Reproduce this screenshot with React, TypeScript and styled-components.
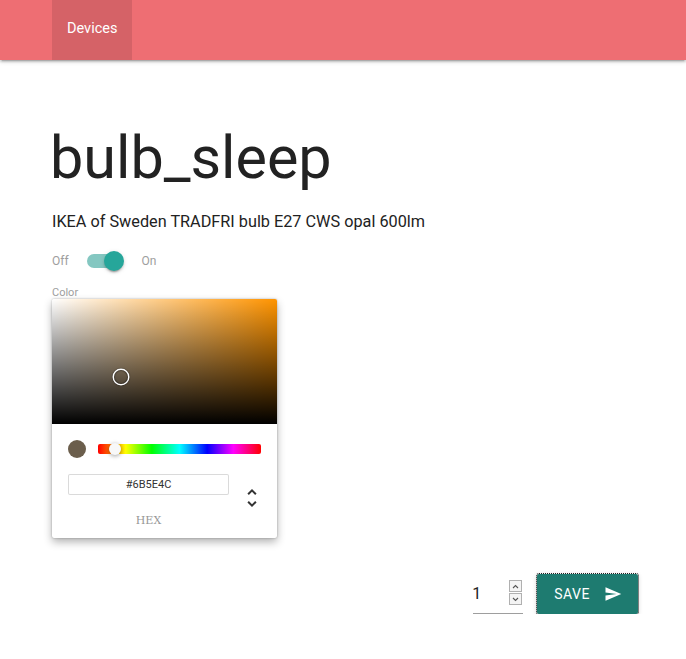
import styled, { createGlobalStyle } from "styled-components";

const GlobalStyle = createGlobalStyle`
  html, body {
    margin: 0;
    padding: 0;
    background: #fff;
    font-family: Roboto, "Noto Sans", sans-serif;
    color: rgba(0, 0, 0, 0.87);
  }
  * {
    box-sizing: border-box;
  }
`;

const HUE = 34.8;
const SAT = 0.29;
const VAL = 0.42;

const Nav = styled.nav`
  height: 60px;
  background: #ee6e73;
  box-shadow: 0 2px 2px 0 rgba(0, 0, 0, 0.14), 0 3px 1px -2px rgba(0, 0, 0, 0.12),
    0 1px 5px 0 rgba(0, 0, 0, 0.2);
  padding: 0 52px;
  display: flex;
`;

const NavItem = styled.a<{ $active?: boolean }>`
  display: flex;
  align-items: center;
  padding: 0 15px 4px;
  color: #fff;
  font-size: 14.5px;
  background: ${(p) => (p.$active ? "rgba(0, 0, 0, 0.1)" : "transparent")};
  cursor: pointer;
`;

const Main = styled.main`
  padding: 0 48px 0 52px;
  display: flex;
  flex-direction: column;
`;

const Title = styled.h1`
  font-size: 59.3px;
  font-weight: 400;
  line-height: 64px;
  margin: 66px 0 0 -2px;
  color: #222;
`;

const Subtitle = styled.p`
  font-size: 16.25px;
  line-height: 20px;
  margin: 22px 0 0;
  color: #222;
`;

const SwitchRow = styled.label`
  display: flex;
  align-items: center;
  margin-top: 19px;
  font-size: 12px;
  color: #9e9e9e;
  height: 20px;
`;

const Lever = styled.span<{ $on: boolean }>`
  position: relative;
  width: 36px;
  height: 14px;
  margin: 0 19px 0 18px;
  border-radius: 15px;
  background: ${(p) => (p.$on ? "#84c7c1" : "#818181")};

  &::after {
    content: "";
    position: absolute;
    top: -3px;
    left: ${(p) => (p.$on ? "17px" : "-2px")};
    width: 20px;
    height: 20px;
    border-radius: 50%;
    background: ${(p) => (p.$on ? "#26a69a" : "#f1f1f1")};
    box-shadow: 0 3px 1px -2px rgba(0, 0, 0, 0.2), 0 2px 2px 0 rgba(0, 0, 0, 0.14),
      0 1px 5px 0 rgba(0, 0, 0, 0.12);
  }
`;

const FieldLabel = styled.div`
  margin-top: 15px;
  font-size: 11px;
  line-height: 13px;
  color: #9e9e9e;
`;

const Picker = styled.div`
  width: 225px;
  margin-top: 0;
  background: #fff;
  border-radius: 2px;
  box-shadow: 0 0 2px rgba(0, 0, 0, 0.3), 0 4px 8px rgba(0, 0, 0, 0.3);
`;

const Saturation = styled.div<{ $hue: number }>`
  position: relative;
  height: 125px;
  border-radius: 2px 2px 0 0;
  overflow: hidden;
  background: linear-gradient(to top, #000, rgba(0, 0, 0, 0)),
    linear-gradient(to right, #fff, rgba(255, 255, 255, 0)),
    hsl(${(p) => p.$hue}, 100%, 50%);
`;

const SatPointer = styled.div`
  position: absolute;
  width: 14px;
  height: 14px;
  border-radius: 50%;
  transform: translate(-7px, -7px);
  box-shadow: 0 0 0 1.5px #fff, inset 0 0 1px 1px rgba(0, 0, 0, 0.3),
    0 0 1px 2px rgba(0, 0, 0, 0.4);
`;

const PickerBody = styled.div`
  padding: 16px 16px 12px;
`;

const Controls = styled.div`
  display: flex;
  align-items: center;
`;

const SwatchCol = styled.div`
  width: 30px;
`;

const Swatch = styled.div<{ $color: string }>`
  width: 18px;
  height: 18px;
  border-radius: 50%;
  background: ${(p) => p.$color};
`;

const HueBar = styled.div`
  position: relative;
  flex: 1;
  height: 10px;
  border-radius: 2px;
  background: linear-gradient(
    to right,
    #f00 0%,
    #ff0 17%,
    #0f0 33%,
    #0ff 50%,
    #00f 67%,
    #f0f 83%,
    #f00 100%
  );
`;

const HuePointer = styled.div`
  position: absolute;
  top: -1px;
  width: 12px;
  height: 12px;
  border-radius: 50%;
  background: #f8f8f8;
  transform: translateX(-5px);
  box-shadow: 0 1px 4px 0 rgba(0, 0, 0, 0.37);
`;

const Fields = styled.div`
  display: flex;
  padding-top: 16px;
`;

const FieldCol = styled.div`
  flex: 1;
  display: flex;
  flex-direction: column;
`;

const HexInput = styled.input`
  width: 100%;
  height: 21px;
  font-size: 11px;
  font-family: Roboto, "Noto Sans", sans-serif;
  color: #333;
  text-align: center;
  border: none;
  border-radius: 2px;
  box-shadow: inset 0 0 0 1px #dadada;
  outline: none;
  padding: 0;
`;

const HexLabel = styled.span`
  margin-top: 20px;
  font-family: "DejaVu Serif", serif;
  font-size: 11px;
  line-height: 11px;
  color: #969696;
  text-transform: uppercase;
  text-align: center;
`;

const Toggle = styled.div`
  width: 32px;
  display: flex;
  justify-content: flex-end;
  padding-top: 12px;

  svg {
    margin-right: -3px;
  }
`;

const ActionRow = styled.div`
  display: flex;
  justify-content: flex-end;
  align-items: center;
  margin-top: 35px;
`;

const NumberField = styled.div`
  position: relative;
  width: 50px;
  height: 41px;
  border-bottom: 1px solid #9e9e9e;
  display: flex;
  align-items: center;
  font-size: 16px;
  color: #222;
  text-indent: -1px;
`;

const Spinner = styled.div`
  position: absolute;
  right: 1px;
  top: 7px;
  width: 13px;
  display: flex;
  flex-direction: column;
  gap: 1px;
`;

const SpinBtn = styled.div`
  height: 12px;
  border: 1px solid #b0b0b0;
  background: #f4f4f4;
  display: flex;
  align-items: center;
  justify-content: center;
`;

const SaveButton = styled.button`
  height: 40px;
  margin-left: 14px;
  padding: 0 16px 0 17px;
  display: flex;
  align-items: center;
  gap: 14px;
  background: #1e7b70;
  color: #fff;
  border: none;
  border-radius: 2px;
  outline: 1px dotted #222;
  font-family: Roboto, "Noto Sans", sans-serif;
  font-size: 14px;
  letter-spacing: 0.5px;
  text-transform: uppercase;
  cursor: pointer;
  box-shadow: 0 2px 2px 0 rgba(0, 0, 0, 0.14), 0 3px 1px -2px rgba(0, 0, 0, 0.12),
    0 1px 5px 0 rgba(0, 0, 0, 0.2);
`;

const Chevron = ({ up }: { up?: boolean }) => (
  <svg width="7" height="5" viewBox="0 0 7 5">
    <path d={up ? "M1 4 L3.5 1.5 L6 4" : "M1 1 L3.5 3.5 L6 1"} fill="none" stroke="#555" strokeWidth="1.1" />
  </svg>
);

export default function App() {
  const hex = "#6B5E4C";
  return (
    <>
      <GlobalStyle />
      <Nav>
        <NavItem $active>Devices</NavItem>
      </Nav>
      <Main>
        <Title>bulb_sleep</Title>
        <Subtitle>IKEA of Sweden TRADFRI bulb E27 CWS opal 600lm</Subtitle>
        <SwitchRow>
          Off
          <Lever $on />
          On
        </SwitchRow>
        <FieldLabel>Color</FieldLabel>
        <Picker>
          <Saturation $hue={HUE}>
            <SatPointer style={{ left: `${SAT * 100 + 1.6}%`, top: `${(1 - VAL) * 100 + 4}%` }} />
          </Saturation>
          <PickerBody>
            <Controls>
              <SwatchCol>
                <Swatch $color={hex} />
              </SwatchCol>
              <HueBar>
                <HuePointer style={{ left: `${(HUE / 360) * 100}%` }} />
              </HueBar>
            </Controls>
            <Fields>
              <FieldCol>
                <HexInput value={hex} readOnly />
                <HexLabel>hex</HexLabel>
              </FieldCol>
              <Toggle>
                <svg width="24" height="24" viewBox="0 0 24 24">
                  <path
                    fill="#333"
                    d="M12,18.17L8.83,15L7.42,16.41L12,21L16.59,16.41L15.17,15M12,5.83L15.17,9L16.58,7.59L12,3L7.41,7.59L8.83,9L12,5.83Z"
                  />
                </svg>
              </Toggle>
            </Fields>
          </PickerBody>
        </Picker>
        <ActionRow>
          <NumberField>
            1
            <Spinner>
              <SpinBtn>
                <Chevron up />
              </SpinBtn>
              <SpinBtn>
                <Chevron />
              </SpinBtn>
            </Spinner>
          </NumberField>
          <SaveButton>
            Save
            <svg width="18" height="18" viewBox="0 0 24 24">
              <path fill="#fff" d="M2.01 21L23 12 2.01 3 2 10l15 2-15 2z" />
            </svg>
          </SaveButton>
        </ActionRow>
      </Main>
    </>
  );
}
